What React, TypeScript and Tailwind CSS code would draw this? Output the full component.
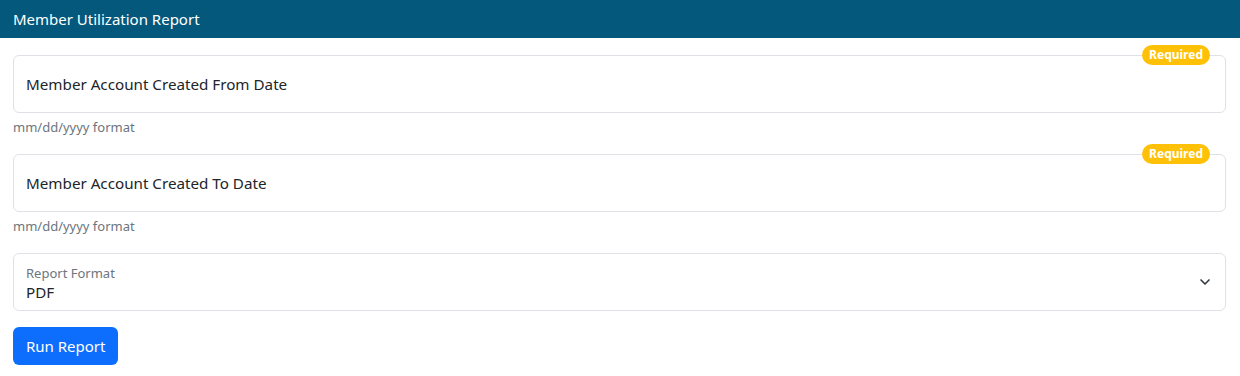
import { ChevronDown } from 'lucide-react'

interface DateFieldProps {
  label: string
}

function DateField({ label }: DateFieldProps) {
  return (
    <div className="mb-4">
      <div className="relative">
        <div className="h-[58px] border border-[#dee2e6] rounded-md bg-white flex items-center px-3">
          <span className="text-[15.2px] text-[#212529]">{label}</span>
        </div>
        <span className="absolute -top-[10px] right-[16px] bg-[#ffc107] text-white text-[12px] font-bold leading-none px-[7px] py-[4px] rounded-full">
          Required
        </span>
      </div>
      <div className="mt-1 text-[13px] leading-[21px] text-[#6c757d]">mm/dd/yyyy format</div>
    </div>
  )
}

export default function App() {
  return (
    <div className="bg-white min-h-[376px]" style={{ fontFamily: '"Noto Sans", "Open Sans", sans-serif' }}>
      <div className="h-[38px] bg-[#03587c] flex items-center px-[13px]">
        <h1 className="text-white text-[15px] font-normal">Member Utilization Report</h1>
      </div>

      <div className="px-[13px] pt-[17px] pr-[14px]">
        <DateField label="Member Account Created From Date" />
        <DateField label="Member Account Created To Date" />

        <div className="relative h-[58px] border border-[#dee2e6] rounded-md bg-white px-3 pt-[10px] mb-4">
          <div className="text-[13px] leading-[18px] text-[#6c757d]">Report Format</div>
          <div className="text-[15.2px] leading-[20px] text-[#212529]">PDF</div>
          <ChevronDown className="absolute right-[12px] top-[20px] w-[16px] h-[16px] text-[#343a40]" strokeWidth={2.5} />
        </div>

        <button className="bg-[#0d6efd] text-white text-[15px] rounded-md h-[38px] px-[13px]">
          Run Report
        </button>
      </div>
    </div>
  )
}
